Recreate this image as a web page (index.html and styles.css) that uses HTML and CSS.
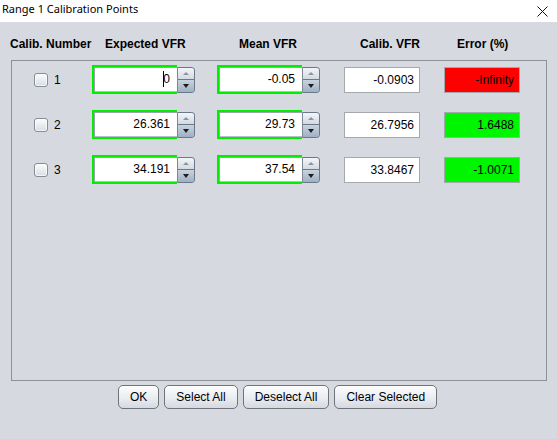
FILE: index.html
```html
<!DOCTYPE html>
<html>
<head>
<meta charset="utf-8">
<title>Range 1 Calibration Points</title>
<link rel="stylesheet" href="styles.css">
</head>
<body>
<div class="window">
  <div class="titlebar">
    <span class="title">Range 1 Calibration Points</span>
    <svg class="close" width="11" height="11" viewBox="0 0 11 11"><path d="M0.5 0.5 L10.5 10.5 M10.5 0.5 L0.5 10.5" stroke="#111" stroke-width="1" fill="none"/></svg>
  </div>
  <div class="content">
    <div class="headers">
      <span>Calib. Number</span>
      <span>Expected VFR</span>
      <span>Mean VFR</span>
      <span>Calib. VFR</span>
      <span>Error (%)</span>
    </div>
    <div class="panel">
      <div class="row">
        <span class="check"></span><span class="num">1</span>
        <div class="spinner"><div class="spin-field"><span class="caret"></span>0</div><div class="spin-btns"><span class="up"><i></i></span><span class="down"><i></i></span></div></div>
        <div class="spinner second"><div class="spin-field">-0.05</div><div class="spin-btns"><span class="up"><i></i></span><span class="down"><i></i></span></div></div>
        <div class="field calib">-0.0903</div>
        <div class="field err bad">-Infinity</div>
      </div>
      <div class="row">
        <span class="check"></span><span class="num">2</span>
        <div class="spinner"><div class="spin-field">26.361</div><div class="spin-btns"><span class="up"><i></i></span><span class="down"><i></i></span></div></div>
        <div class="spinner second"><div class="spin-field">29.73</div><div class="spin-btns"><span class="up"><i></i></span><span class="down"><i></i></span></div></div>
        <div class="field calib">26.7956</div>
        <div class="field err good">1.6488</div>
      </div>
      <div class="row">
        <span class="check"></span><span class="num">3</span>
        <div class="spinner"><div class="spin-field">34.191</div><div class="spin-btns"><span class="up"><i></i></span><span class="down"><i></i></span></div></div>
        <div class="spinner second"><div class="spin-field">37.54</div><div class="spin-btns"><span class="up"><i></i></span><span class="down"><i></i></span></div></div>
        <div class="field calib">33.8467</div>
        <div class="field err good">-1.0071</div>
      </div>
    </div>
    <div class="buttons">
      <button class="btn">OK</button>
      <button class="btn">Select All</button>
      <button class="btn">Deselect All</button>
      <button class="btn">Clear Selected</button>
    </div>
  </div>
</div>
</body>
</html>
```
FILE: styles.css
```css
* { box-sizing: border-box; }
html, body { margin: 0; padding: 0; }
body {
  width: 557px;
  height: 439px;
  overflow: hidden;
  background: #d6d9df;
  font-family: "Liberation Sans", Arial, sans-serif;
  font-size: 12px;
  color: #000;
}
.window { width: 557px; height: 439px; display: flex; flex-direction: column; }
.titlebar {
  height: 22px;
  background: #fff;
  display: flex;
  align-items: flex-start;
  justify-content: space-between;
  padding: 2px 9px 0 2px;
}
.title {
  font-family: "Noto Sans", "Open Sans", sans-serif;
  font-size: 11px;
  color: #000;
  line-height: 14px;
}
.close { display: block; margin-top: 4px; }
.content { flex: 1; display: flex; flex-direction: column; }
.headers {
  display: grid;
  grid-template-columns: 95px 134px 121px 97px auto;
  padding: 15px 0 9px 10px;
  line-height: 14px;
  font-weight: bold;
  white-space: nowrap;
}
.panel {
  margin: 0 10px 0 11px;
  height: 321px;
  border: 1px solid #8e9196;
  padding-top: 4px;
  display: flex;
  flex-direction: column;
  gap: 16px;
}
.row {
  height: 29px;
  display: flex;
  align-items: center;
  padding-left: 22px;
}
.check {
  width: 14px;
  height: 14px;
  border: 1px solid #868d97;
  border-radius: 3px;
  background: linear-gradient(#fbfcfd, #d9dde3);
  box-shadow: inset 0 0 0 1px rgba(255,255,255,0.7);
  margin-right: 6px;
}
.num { width: 38px; line-height: 14px; }
.spinner { display: flex; align-items: center; width: 103px; height: 29px; }
.spinner.second { margin-left: 22px; }
.spin-field {
  width: 85px;
  height: 29px;
  border: 2px solid #00ee00;
  border-right: none;
  background: #fff;
  box-shadow: inset 1px 1px 0 #9ca4b0, inset 0 -1px 0 #b8bec7;
  text-align: right;
  padding-right: 7px;
  line-height: 25px;
  white-space: nowrap;
}
.caret {
  display: inline-block;
  width: 1px;
  height: 16px;
  background: #000;
  vertical-align: -4px;
  margin-right: -1px;
}
.spin-btns {
  width: 18px;
  height: 26px;
  display: flex;
  flex-direction: column;
  border: 1px solid #6b7888;
  border-left-color: #7d8897;
  border-radius: 0 4px 4px 0;
  overflow: hidden;
}
.spin-btns span { flex: 1; display: flex; align-items: center; justify-content: center; }
.spin-btns .up {
  background: linear-gradient(#f3f5f8, #d4dae2);
  border-bottom: 1px solid #6b7888;
}
.spin-btns .down { background: linear-gradient(#c9d3df, #9fb0c4); }
.spin-btns .up i {
  width: 0; height: 0;
  border-left: 3px solid transparent;
  border-right: 3px solid transparent;
  border-bottom: 3px solid #8b95a2;
}
.spin-btns .down i {
  width: 0; height: 0;
  border-left: 3.5px solid transparent;
  border-right: 3.5px solid transparent;
  border-top: 4px solid #1c1c1c;
}
.field {
  width: 76px;
  height: 26px;
  border: 1px solid #a5a8ad;
  background: #fff;
  text-align: right;
  padding-right: 5px;
  line-height: 24px;
  white-space: nowrap;
}
.field.calib { margin-left: 24px; }
.field.err { margin-left: 24px; }
.field.bad { background: #ff0000; }
.field.good { background: #00f500; }
.buttons {
  display: flex;
  gap: 5px;
  padding-left: 118px;
  margin-top: 4px;
}
.btn {
  height: 24px;
  padding: 0 11px;
  font-family: "Liberation Sans", Arial, sans-serif;
  font-size: 12px;
  color: #000;
  border: 1px solid #6f737a;
  border-radius: 5px;
  background: linear-gradient(#fdfdfe, #e9ecf0 55%, #d5d9e0);
  box-shadow: inset 0 1px 0 #fff;
  line-height: 20px;
}
```
